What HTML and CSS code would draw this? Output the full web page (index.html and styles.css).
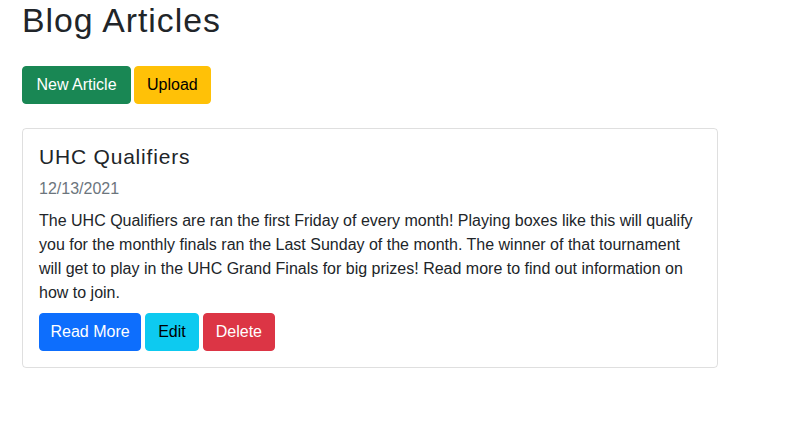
FILE: index.html
```html
<!DOCTYPE html>
<html lang="en">
<head>
<meta charset="utf-8">
<title>Blog Articles</title>
<link rel="stylesheet" href="styles.css">
</head>
<body>
<main class="page">
  <h1 class="page-title">Blog Articles</h1>
  <div class="actions">
    <a class="btn btn-success" href="#">New Article</a>
    <a class="btn btn-warning" href="#">Upload</a>
  </div>
  <article class="card">
    <div class="card-body">
      <h5 class="card-title">UHC Qualifiers</h5>
      <h6 class="card-subtitle">12/13/2021</h6>
      <p class="card-text">The UHC Qualifiers are ran the first Friday of every month! Playing boxes like this will qualify you for the monthly finals ran the Last Sunday of the month. The winner of that tournament will get to play in the UHC Grand Finals for big prizes! Read more to find out information on how to join.</p>
      <div class="card-actions">
        <a class="btn btn-primary" href="#">Read More</a>
        <a class="btn btn-info" href="#">Edit</a>
        <a class="btn btn-danger" href="#">Delete</a>
      </div>
    </div>
  </article>
</main>
</body>
</html>
```

FILE: styles.css
```css
* { box-sizing: border-box; }
html, body { margin: 0; padding: 0; background: #fff; }
body {
  font-family: "Liberation Sans", Arial, sans-serif;
  font-size: 16px;
  line-height: 1.5;
  color: #212529;
}
.page {
  padding: 0 22px;
}
.page-title {
  margin: 0 0 25px;
  font-size: 33.8px;
  font-weight: 500;
  line-height: 1.2;
  letter-spacing: 1px;
}
.actions {
  display: flex;
  gap: 3px;
  margin-bottom: 24px;
}
.btn {
  display: inline-block;
  padding: 6px 12px;
  font-size: 16px;
  line-height: 24px;
  border: 1px solid transparent;
  border-radius: 4px;
  text-decoration: none;
  text-align: center;
}
.btn-success { background: #198754; border-color: #198754; color: #fff; padding: 6px 13.5px; }
.btn-warning { background: #ffc107; border-color: #ffc107; color: #000; }
.btn-primary { background: #0d6efd; border-color: #0d6efd; color: #fff; padding: 6px 10.5px; }
.btn-info { background: #0dcaf0; border-color: #0dcaf0; color: #000; }
.btn-danger { background: #dc3545; border-color: #dc3545; color: #fff; }
.card {
  width: 696px;
  border: 1px solid rgba(0, 0, 0, 0.125);
  border-radius: 4px;
}
.card-body {
  padding: 16px;
}
.card-title {
  margin: 0 0 8px;
  font-size: 21px;
  font-weight: 500;
  line-height: 24px;
  letter-spacing: 0.8px;
}
.card-subtitle {
  margin: 0 0 8px;
  font-size: 16px;
  font-weight: 400;
  line-height: 1.5;
  color: #6c757d;
}
.card-text {
  margin: 0 0 8px;
}
.card-actions {
  display: flex;
  gap: 4px;
}
```
